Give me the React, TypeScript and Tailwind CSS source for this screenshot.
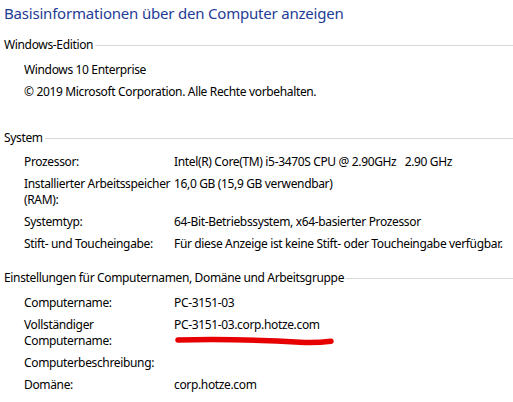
import React from "react";

type Row = { label: React.ReactNode; value?: string };

function Heading({ text, className }: { text: string; className?: string }) {
  return (
    <div className={"flex items-center h-[16px] pl-[4px] " + (className ?? "")}>
      <span className="whitespace-nowrap leading-[16px]">{text}</span>
      <div className="flex-1 h-px bg-[#d9d9d9] ml-[2px]" />
    </div>
  );
}

function Rows({ rows, className }: { rows: Row[]; className?: string }) {
  return (
    <div className={"flex flex-col " + (className ?? "")}>
      {rows.map((r, i) => (
        <div key={i} className="flex py-[3px] leading-[16px]">
          <div className="w-[174px] pl-[24px] whitespace-nowrap shrink-0">{r.label}</div>
          <div className="whitespace-pre">{r.value}</div>
        </div>
      ))}
    </div>
  );
}

export default function App() {
  return (
    <div
      className="relative w-[513px] h-[402px] bg-white overflow-hidden text-[12px] tracking-[-0.35px] text-black"
      style={{ fontFamily: '"Noto Sans", "Open Sans", sans-serif' }}
    >
      <div className="pl-[4px] pt-[3px] h-[23px] leading-[20px] text-[15px] tracking-[-0.2px] text-[#1e3c96] whitespace-nowrap">
        Basisinformationen über den Computer anzeigen
      </div>

      <Heading text="Windows-Edition" className="mt-[14px]" />
      <div className="flex flex-col mt-[6px]">
        <div className="pl-[24px] py-[3px] leading-[16px]">Windows 10 Enterprise</div>
        <div className="pl-[24px] py-[3px] leading-[16px]">© 2019 Microsoft Corporation. Alle Rechte vorbehalten.</div>
      </div>

      <Heading text="System" className="mt-[27px]" />
      <Rows
        className="mt-[5px]"
        rows={[
          { label: "Prozessor:", value: "Intel(R) Core(TM) i5-3470S CPU @ 2.90GHz   2.90 GHz" },
          {
            label: (
              <>
                Installierter Arbeitsspeicher
                <br />
                (RAM):
              </>
            ),
            value: "16,0 GB (15,9 GB verwendbar)",
          },
          { label: "Systemtyp:", value: "64-Bit-Betriebssystem, x64-basierter Prozessor" },
          { label: "Stift- und Toucheingabe:", value: "Für diese Anzeige ist keine Stift- oder Toucheingabe verfügbar." },
        ]}
      />

      <Heading text="Einstellungen für Computernamen, Domäne und Arbeitsgruppe" className="mt-[15px]" />
      <Rows
        className="mt-[6px]"
        rows={[
          { label: "Computername:", value: "PC-3151-03" },
          {
            label: (
              <>
                Vollständiger
                <br />
                Computername:
              </>
            ),
            value: "PC-3151-03.corp.hotze.com",
          },
          { label: "Computerbeschreibung:", value: "" },
          { label: "Domäne:", value: "corp.hotze.com" },
        ]}
      />

      <svg
        className="absolute left-0 top-0 pointer-events-none"
        width="513"
        height="402"
        viewBox="0 0 513 402"
      >
        <path
          d="M178 340 C 220 339, 270 340.5, 300 342.3 C 315 343, 325 342, 331 341.3"
          fill="none"
          stroke="#e60000"
          strokeWidth="5.5"
          strokeLinecap="round"
        />
      </svg>
    </div>
  );
}
